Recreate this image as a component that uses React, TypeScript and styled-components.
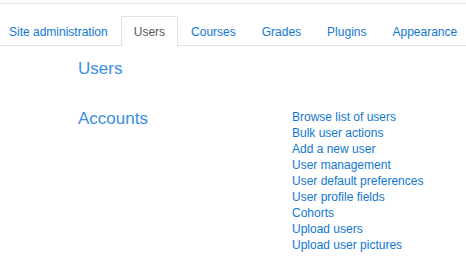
import React from "react";
import styled, { createGlobalStyle } from "styled-components";

const GlobalStyle = createGlobalStyle`
  body {
    margin: 0;
    background: #fff;
    font-family: "Liberation Sans", Arial, sans-serif;
  }
`;

const Page = styled.div`
  width: 466px;
  height: 274px;
  overflow: hidden;
  padding-top: 3px;
  box-sizing: border-box;
`;

const TopRule = styled.div`
  border-top: 1px solid #e6e6e6;
`;

const TabBar = styled.ul`
  display: flex;
  list-style: none;
  margin: 12px 0 0 -4px;
  padding: 0;
  border-bottom: 1px solid #dee2e6;
  height: 29px;
`;

const Tab = styled.li<{ $active?: boolean }>`
  padding: 0 12px;
  box-sizing: border-box;
  display: flex;
  align-items: center;
  font-size: 12px;
  white-space: nowrap;
  color: ${(p) => (p.$active ? "#555b61" : "#1177d1")};
  background: ${(p) => (p.$active ? "#fff" : "transparent")};
  border: 1px solid ${(p) => (p.$active ? "#dee2e6" : "transparent")};
  border-bottom: none;
  margin-bottom: -1px;
  height: 30px;
`;

const Content = styled.div`
  padding-left: 78px;
`;

const Heading = styled.h2`
  margin: 0;
  padding-top: 12px;
  font-size: 17px;
  font-weight: 400;
  color: #3a8ee3;
  line-height: 22px;
`;

const Section = styled.div`
  display: grid;
  grid-template-columns: 214px 1fr;
  margin-top: 27px;
`;

const SectionTitle = styled.h3`
  margin: 0;
  padding-top: 1px;
  font-size: 17px;
  font-weight: 400;
  color: #3a8ee3;
  line-height: 22px;
`;

const LinkList = styled.ul`
  list-style: none;
  margin: 0;
  padding: 2px 0 0;
`;

const LinkItem = styled.li`
  font-size: 12px;
  line-height: 16px;
  color: #1177d1;
`;

const tabs = ["Site administration", "Users", "Courses", "Grades", "Plugins", "Appearance"];

const links = [
  "Browse list of users",
  "Bulk user actions",
  "Add a new user",
  "User management",
  "User default preferences",
  "User profile fields",
  "Cohorts",
  "Upload users",
  "Upload user pictures",
];

export default function App() {
  return (
    <Page>
      <GlobalStyle />
      <TopRule />
      <TabBar>
        {tabs.map((t) => (
          <Tab key={t} $active={t === "Users"}>
            {t}
          </Tab>
        ))}
      </TabBar>
      <Content>
        <Heading>Users</Heading>
        <Section>
          <SectionTitle>Accounts</SectionTitle>
          <LinkList>
            {links.map((l) => (
              <LinkItem key={l}>{l}</LinkItem>
            ))}
          </LinkList>
        </Section>
      </Content>
    </Page>
  );
}
